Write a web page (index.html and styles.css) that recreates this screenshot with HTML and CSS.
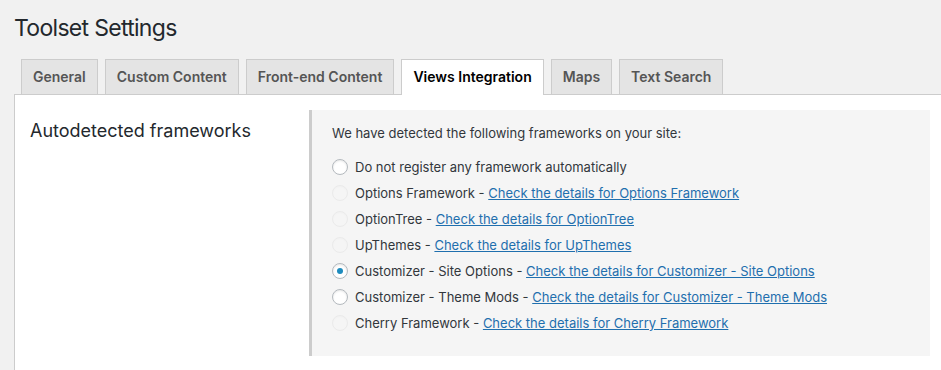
FILE: index.html
```html
<!DOCTYPE html>
<html lang="en">
<head>
    <meta charset="UTF-8">
    <title>Toolset Settings</title>
    <link rel="stylesheet" href="styles.css">
</head>
<body>
    <div class="wrap">
        <h1 class="page-title">Toolset Settings</h1>

        <nav class="nav-tabs">
            <a class="nav-tab" href="#">General</a>
            <a class="nav-tab" href="#">Custom Content</a>
            <a class="nav-tab" href="#">Front-end Content</a>
            <a class="nav-tab nav-tab-active" href="#">Views Integration</a>
            <a class="nav-tab" href="#">Maps</a>
            <a class="nav-tab" href="#">Text Search</a>
        </nav>

        <div class="settings-panel">
            <h2 class="section-title">Autodetected frameworks</h2>

            <div class="section-box">
                <p class="intro">We have detected the following frameworks on your site:</p>
                <ul class="framework-list">
                    <li><span class="radio"></span><span class="label">Do not register any framework automatically</span></li>
                    <li><span class="radio disabled"></span><span class="label">Options Framework - <a href="#">Check the details for Options Framework</a></span></li>
                    <li><span class="radio disabled"></span><span class="label">OptionTree - <a href="#">Check the details for OptionTree</a></span></li>
                    <li><span class="radio disabled"></span><span class="label">UpThemes - <a href="#">Check the details for UpThemes</a></span></li>
                    <li><span class="radio checked"></span><span class="label">Customizer - Site Options - <a href="#">Check the details for Customizer - Site Options</a></span></li>
                    <li><span class="radio"></span><span class="label">Customizer - Theme Mods - <a href="#">Check the details for Customizer - Theme Mods</a></span></li>
                    <li><span class="radio disabled"></span><span class="label">Cherry Framework - <a href="#">Check the details for Cherry Framework</a></span></li>
                </ul>
            </div>
        </div>
    </div>
</body>
</html>
```

FILE: styles.css
```css
:root {
    --page-bg: #f1f1f1;
    --border: #cccccc;
    --tab-bg: #e4e4e4;
    --text: #23282d;
    --text-muted: #555555;
    --link: #0073aa;
}

* {
    margin: 0;
    padding: 0;
    box-sizing: border-box;
}

body {
    font-family: Inter, "Liberation Sans", sans-serif;
    background-color: var(--page-bg);
    color: var(--text);
    font-size: 13px;
    height: 370px;
    overflow: hidden;
}

.wrap {
    padding-left: 14px;
}

.page-title {
    margin-top: 14px;
    font-size: 23px;
    font-weight: 400;
    line-height: 29px;
    letter-spacing: -0.7px;
    color: var(--text);
}

.nav-tabs {
    display: flex;
    gap: 7px;
    margin-top: 16px;
    padding-left: 7px;
}

.nav-tab {
    display: block;
    padding: 5px 11px;
    border: 1px solid var(--border);
    border-bottom: none;
    background: var(--tab-bg);
    color: var(--text-muted);
    font-size: 14px;
    font-weight: 600;
    line-height: 24px;
    text-decoration: none;
    white-space: nowrap;
}

.nav-tab-active {
    background: #ffffff;
    color: #000000;
    margin-bottom: -1px;
    padding-bottom: 6px;
}

.settings-panel {
    display: grid;
    grid-template-columns: 294px 621px;
    align-items: start;
    padding: 15px 0 14px 0;
    background: #ffffff;
    border-top: 1px solid var(--border);
    border-left: 1px solid var(--border);
}

.section-title {
    margin-top: 9px;
    padding-left: 15px;
    font-size: 18px;
    font-weight: 400;
    line-height: 24px;
    color: var(--text);
}

.section-box {
    background: #f5f5f5;
    border-left: 3px solid var(--border);
    padding: 13px 20px 20px 20px;
}

.intro {
    line-height: 20px;
    color: #32373c;
    margin-bottom: 11px;
}

.framework-list {
    list-style: none;
}

.framework-list li {
    display: flex;
    align-items: center;
    height: 26px;
    color: #32373c;
}

.framework-list a {
    color: #1f6fae;
    text-decoration: underline;
}

.radio {
    flex: none;
    width: 16px;
    height: 16px;
    margin-right: 7px;
    border: 1px solid #b4b9be;
    border-radius: 50%;
    background: #ffffff;
    box-shadow: inset 0 1px 2px rgba(0, 0, 0, 0.1);
    display: flex;
    align-items: center;
    justify-content: center;
}

.radio.checked::after {
    content: "";
    width: 6px;
    height: 6px;
    border-radius: 50%;
    background: #1e8cbe;
}

.radio.disabled {
    border-color: #eaeaea;
    background: #f5f5f5;
    box-shadow: inset 0 1px 2px rgba(0, 0, 0, 0.02);
}
```
